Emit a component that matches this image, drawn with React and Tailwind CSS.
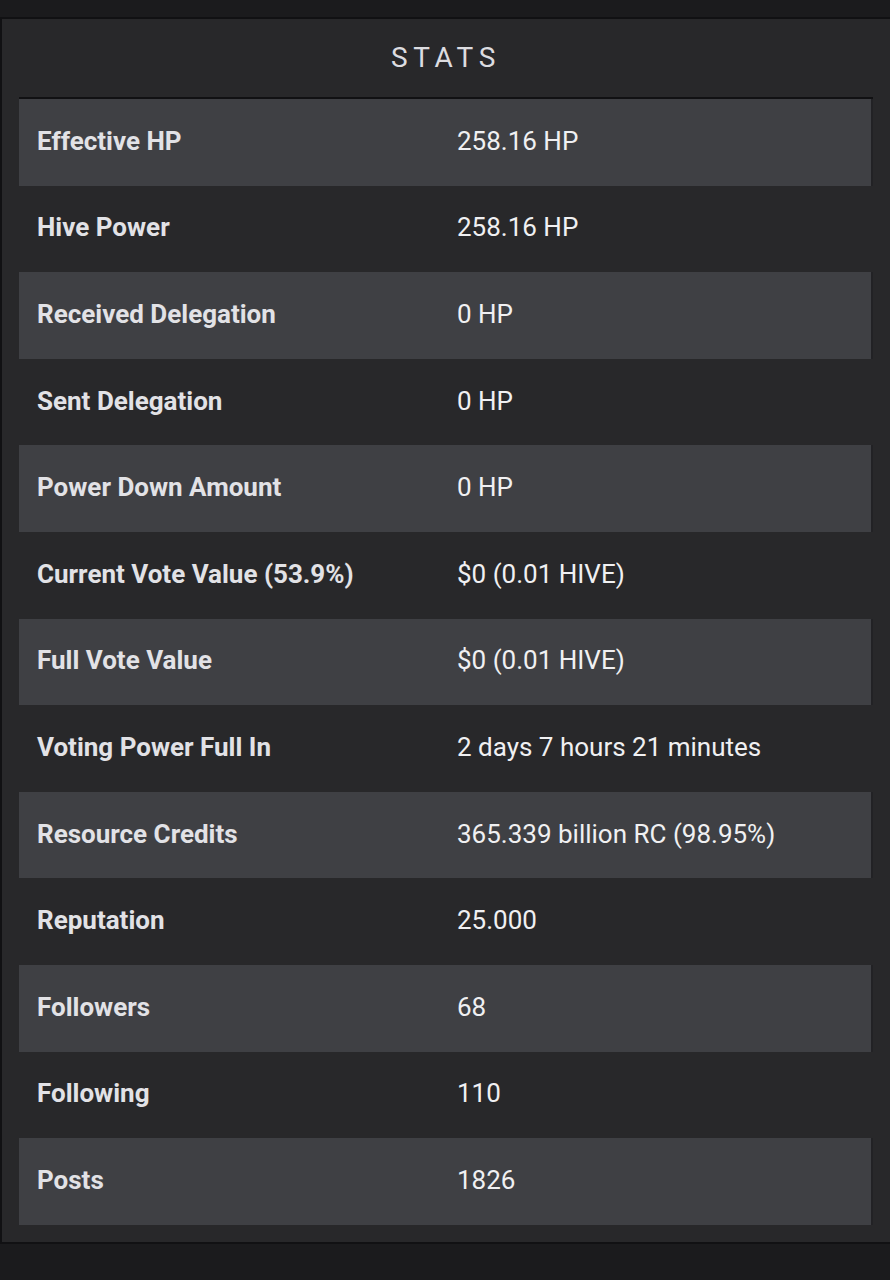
const stats = [
  ['Effective HP', '258.16 HP'],
  ['Hive Power', '258.16 HP'],
  ['Received Delegation', '0 HP'],
  ['Sent Delegation', '0 HP'],
  ['Power Down Amount', '0 HP'],
  ['Current Vote Value (53.9%)', '$0 (0.01 HIVE)'],
  ['Full Vote Value', '$0 (0.01 HIVE)'],
  ['Voting Power Full In', '2 days 7 hours 21 minutes'],
  ['Resource Credits', '365.339 billion RC (98.95%)'],
  ['Reputation', '25.000'],
  ['Followers', '68'],
  ['Following', '110'],
  ['Posts', '1826'],
];

export default function App() {
  return (
    <div className="min-h-[1280px] w-[890px] bg-[#1b1b1d] pt-[17px] font-['Roboto',sans-serif]">
      <div className="border-t-2 border-l-2 border-b-2 border-[#111113] bg-[#28282a] pb-[17px]">
        <h2 className="flex h-[78px] items-center justify-center text-[28px] tracking-[0.2em] text-[#dcdce0]">
          STATS
        </h2>
        <div className="mx-[17px] border-t-2 border-[#111113]">
          {stats.map(([label, value], i) => (
            <div
              key={label}
              className={`grid h-[86.6px] grid-cols-[420px_1fr] items-center pb-[2px] ${i % 2 === 0 ? 'bg-[#3f4044] border-r-2 border-[#222225]' : 'bg-[#28282a]'}`}
            >
              <div className="pl-[18px] text-[26px] font-bold text-[#e2e2e6]">{label}</div>
              <div className="pl-[18px] text-[26px] text-[#f0f0f2]">{value}</div>
            </div>
          ))}
        </div>
      </div>
    </div>
  );
}
